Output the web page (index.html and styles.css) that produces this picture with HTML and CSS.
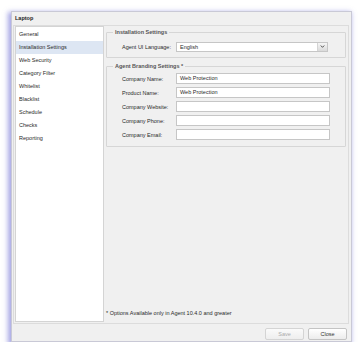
FILE: index.html
```html
<!DOCTYPE html>
<html>
<head>
<meta charset="utf-8">
<link rel="stylesheet" href="styles.css">
</head>
<body>
<div class="window">
  <div class="title">Laptop</div>
  <div class="body">
    <ul class="nav">
      <li>General</li>
      <li class="sel">Installation Settings</li>
      <li>Web Security</li>
      <li>Category Filter</li>
      <li>Whitelist</li>
      <li>Blacklist</li>
      <li>Schedule</li>
      <li>Checks</li>
      <li>Reporting</li>
    </ul>
    <div class="panel">
      <div class="group g1">
        <div class="legend">Installation Settings</div>
        <div class="row">
          <label>Agent UI Language:</label>
          <div class="select"><span>English</span><span class="arrow"><svg class="chev" viewBox="0 0 6 4"><path d="M0.7 0.7 L3 3.1 L5.3 0.7" fill="none" stroke="#444" stroke-width="1.2"/></svg></span></div>
        </div>
      </div>
      <div class="group g2">
        <div class="legend">Agent Branding Settings *</div>
        <div class="row"><label>Company Name:</label><div class="input">Web Protection</div></div>
        <div class="row"><label>Product Name:</label><div class="input">Web Protection</div></div>
        <div class="row"><label>Company Website:</label><div class="input"></div></div>
        <div class="row"><label>Company Phone:</label><div class="input"></div></div>
        <div class="row"><label>Company Email:</label><div class="input"></div></div>
      </div>
      <div class="note">* Options Available only in Agent 10.4.0 and greater</div>
    </div>
  </div>
  <div class="footer">
    <button class="btn disabled">Save</button>
    <button class="btn">Close</button>
  </div>
</div>
</body>
</html>
```
FILE: styles.css
```css
html, body {
  margin: 0;
  padding: 0;
  background: #ffffff;
}
body {
  padding: 11px 0 0 11px;
  font-family: "Liberation Sans", Arial, sans-serif;
  font-size: 5.5px;
  color: #2a2a2a;
}
* {
  box-sizing: border-box;
}
.window {
  width: 341px;
  height: 331px;
  background: #f0f0f0;
  border: 1px solid #c9c9d6;
  box-shadow: -2px 2px 5px 1px rgba(105, 105, 210, 0.6);
  display: flex;
  flex-direction: column;
}
.title {
  height: 13px;
  line-height: 13px;
  padding-left: 3px;
  font-weight: bold;
  color: #222;
}
.body {
  height: 299px;
  margin: 0 2px 0 1px;
  border: 1px solid #dcdcdc;
  display: flex;
  padding: 0 2px 1px 1px;
  gap: 2px;
}
.nav {
  list-style: none;
  margin: 0;
  padding: 1px 0 0 0;
  width: 89px;
  background: #fff;
  border: 1px solid #d4d4d4;
}
.nav li {
  height: 13px;
  line-height: 13px;
  padding-left: 3px;
}
.nav li.sel {
  background: #dde6f3;
}
.panel {
  flex: 1;
  display: flex;
  flex-direction: column;
}
.group {
  border: 1px solid #d6d6d6;
  border-radius: 1px;
  padding: 0 0 0 15px;
  width: 240px;
}
.legend {
  width: max-content;
  height: 7px;
  line-height: 7px;
  margin: -4px 0 0 -9px;
  padding: 0 2px;
  background: #f0f0f0;
  font-weight: bold;
  color: #555;
}
.g1 {
  margin-top: 6px;
  height: 26px;
}
.g2 {
  margin-top: 8px;
  height: 81px;
}
.row {
  display: flex;
  align-items: center;
  height: 11px;
  margin-top: 3px;
}
.g1 .row,
.g2 .row:first-of-type {
  margin-top: 5px;
}
.row label {
  width: 54px;
}
.select {
  width: 152px;
  height: 10px;
  background: #fff;
  border: 1px solid #c6c6c6;
  display: flex;
  align-items: center;
  justify-content: space-between;
  padding-left: 3px;
}
.select .arrow {
  width: 10px;
  height: 8px;
  background: linear-gradient(#f6f6f6, #dadada);
  border-left: 1px solid #d4d4d4;
  display: flex;
  align-items: center;
  justify-content: center;
}
.chev {
  width: 5px;
  height: 3px;
  display: block;
}
.input {
  width: 154px;
  height: 11px;
  line-height: 9px;
  background: #fff;
  border: 1px solid #c6c6c6;
  padding-left: 3px;
}
.note {
  margin-top: auto;
  margin-bottom: 5px;
  line-height: 7px;
}
.footer {
  height: 17px;
  display: flex;
  justify-content: flex-end;
  align-items: flex-start;
  gap: 4px;
  padding: 4px 4px 0 0;
}
.btn {
  width: 39px;
  height: 12px;
  font-family: "Liberation Sans", Arial, sans-serif;
  font-size: 5.5px;
  color: #333;
  background: linear-gradient(#ffffff, #ececec);
  border: 1px solid #c4c4c4;
  border-radius: 2px;
  padding: 0;
}
.btn.disabled {
  color: #aaa;
  border-color: #d4d4d4;
  background: linear-gradient(#fafafa, #eeeeee);
}
```
